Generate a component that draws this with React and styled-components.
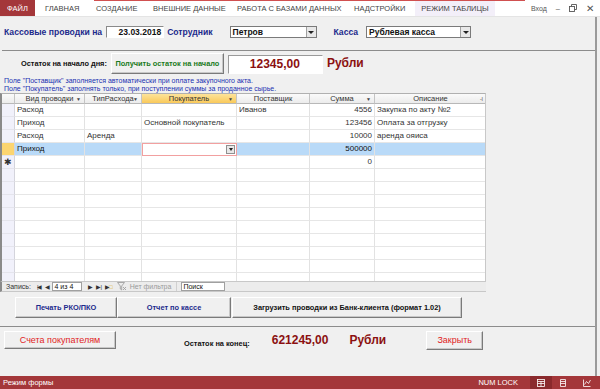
import React from "react";
import styled, { createGlobalStyle } from "styled-components";

const Global = createGlobalStyle`
  html, body { margin: 0; padding: 0; }
  body { width: 600px; height: 389px; overflow: hidden; background: #f0f0f0; font-family: "Liberation Sans", Arial, sans-serif; }
  * { box-sizing: border-box; }
`;

const Page = styled.div`
  width: 600px; height: 389px; display: flex; flex-direction: column;
`;

const Ribbon = styled.div`
  height: 17px; background: #fff; display: flex; align-items: stretch; position: relative;
  font-size: 7.5px; color: #444; border-bottom: 1px solid #e4e4e4; white-space: nowrap;
`;
const RedLine = styled.div`
  position: absolute; top: 0; left: 94px; width: 431px; height: 1px; background: #d05050;
`;
const FileTab = styled.div`
  width: 35px; background: #a4373a; color: #fff; display: flex; align-items: center; justify-content: center;
  margin-right: 10px;
`;
const Tab = styled.div`
  display: flex; align-items: center; width: ${p => p.$w}px; flex-shrink: 0;
  justify-content: ${p => (p.$active ? "center" : "flex-start")};
  background: ${p => (p.$active ? "#f3eff9" : "transparent")};
`;
const WinCtl = styled.div`
  margin-left: auto; display: flex; align-items: center; gap: 9px; padding-right: 6px; color: #555;
`;

const Main = styled.div`
  flex: 1; display: flex; flex-direction: column; border-right: 2px solid #9a9a9a; margin-right: 3px;
`;

const HeaderRow = styled.div`
  height: 33px; display: flex; align-items: flex-start; padding: 9px 0 0 4px;
`;
const NavyLabel = styled.span`
  color: #1c2a8c; font-size: 8.6px; font-weight: bold; line-height: 12px;
  margin-left: ${p => p.$ml || 0}px;
`;
const DateBox = styled.div`
  width: 58px; height: 12px; background: #fff; border: 1px solid #8a8a8a; border-right-color: #fff;
  border-bottom-color: #fff; font-size: 8.5px; font-weight: bold; color: #111; text-align: right;
  padding-right: 2px; line-height: 10px; margin: 0 3px 0 4px;
`;
const Combo = styled.div`
  width: ${p => p.$w}px; height: 12px; background: #fff; border: 1px solid #7a7a7a; display: flex;
  margin-left: ${p => p.$ml || 0}px;
`;
const ComboText = styled.div`
  flex: 1; font-size: 8.5px; font-weight: bold; color: #111; padding-left: 2px; line-height: 10px;
`;
const DropBtn = styled.div`
  width: 10px; background: #e8e8e8; border-left: 1px solid #a0a0a0; display: flex; align-items: center;
  justify-content: center;
  &::after { content: ""; border-left: 3px solid transparent; border-right: 3px solid transparent; border-top: 3px solid #222; }
`;

const Divider = styled.div`
  height: 1px; background: #8c8c8c; margin: ${p => p.$m || "0"};
`;

const BalanceRow = styled.div`
  display: flex; align-items: center; height: 22px; padding-left: 21px; margin-top: 1px;
`;
const BoldLabel = styled.span`
  font-size: 7.4px; font-weight: bold; color: #111; margin-right: ${p => p.$mr || 0}px; white-space: nowrap;
`;
const Button = styled.div`
  height: ${p => p.$h || 20}px; width: ${p => p.$w}px; background: #f0f0f0;
  border: 1px solid; border-color: #fff #7a7a7a #7a7a7a #fff; box-shadow: inset -1px -1px 0 #c8c8c8;
  display: flex; align-items: center; justify-content: center; white-space: nowrap;
  font-size: ${p => p.$fs || 7.4}px; font-weight: ${p => (p.$bold ? "bold" : "normal")};
  color: ${p => p.$color || "#1c2a8c"}; margin-left: ${p => p.$ml || 0}px; flex-shrink: 0;
`;
const ValueBox = styled.div`
  width: 95px; height: 19px; margin-left: 4px; background: #fff; border: 1px solid #9a9a9a;
  border-right-color: #fff; border-bottom-color: #fff; color: #8b1010; font-weight: bold;
  font-size: 12px; text-align: right; padding-right: 22px; line-height: 17px; align-self: flex-end;
`;
const Rub = styled.span`
  color: #8b1010; font-weight: bold; font-size: 12px; margin-left: ${p => p.$ml || 4}px; white-space: nowrap;
`;

const Notes = styled.div`
  color: #2030b0; font-size: 7px; line-height: 8px; padding: 3px 0 0 4px; height: 19px;
`;

const Sheet = styled.div`
  width: 486px; height: 188px; display: grid; overflow: hidden; margin-left: 0;
  grid-template-columns: 13px 70px 57px 95px 73px 65px 112px;
  grid-auto-rows: 13px; grid-template-rows: 10px; background: #fff;
  border-left: 2px solid #8a8a8a; border-top: 1px solid #b0b0b0; border-right: 1px solid #c8c8c8;
  font-size: 8px; color: #333;
`;
const Head = styled.div`
  background: ${p => (p.$hl ? "linear-gradient(#fde39a, #f9c95a)" : "linear-gradient(#fafafa, #ececec)")};
  border-right: 1px solid #c4c4c4; border-bottom: 1px solid #b8b8b8;
  display: flex; align-items: center; justify-content: center; position: relative; color: #333;
  font-size: 7.5px; line-height: 9px; white-space: nowrap;
`;
const HeadArrow = styled.span`
  position: absolute; right: 3px; top: 1px; font-size: 5px; color: #444;
`;
const Sel = styled.div`
  background: ${p => (p.$cur ? "#fcd570" : "#f1f1fb")}; border-right: 1px solid #d4d4dc;
  border-bottom: 1px solid #e4e4ec; font-size: 9px; color: #333; display: flex; align-items: center;
  justify-content: center;
`;
const Cell = styled.div`
  border-right: 1px solid #e2e2e2; border-bottom: 1px solid #e6e6e6;
  background: ${p => (p.$cur ? "#b9daf8" : "#fff")}; padding: 0 2px; line-height: 12px;
  text-align: ${p => (p.$right ? "right" : "left")}; white-space: nowrap; overflow: hidden;
  color: ${p => (p.$cur ? "#111" : "#333")};
`;
const EditCell = styled.div`
  background: #fff; border: 1px solid #f2a0a0; display: flex; justify-content: flex-end; padding: 1px;
`;
const MiniDrop = styled.div`
  width: 9px; background: #e8e8e8; border: 1px solid #909090; display: flex; align-items: center;
  justify-content: center;
  &::after { content: ""; border-left: 2.5px solid transparent; border-right: 2.5px solid transparent; border-top: 3px solid #222; }
`;

const NavBar = styled.div`
  width: 486px; height: 11px; background: #ececec; display: flex; align-items: center;
  border-left: 2px solid #8a8a8a; border-top: 1px solid #c8c8c8; border-bottom: 1px solid #c8c8c8;
  font-size: 7px; color: #333; padding-left: 4px; white-space: nowrap;
`;
const NavIcon = styled.span`
  font-size: 6px; margin-left: ${p => p.$ml || 4}px; color: #333; letter-spacing: -1px;
`;
const NavBox = styled.div`
  width: ${p => p.$w}px; height: 9px; background: #fff; border: 1px solid #a0a0a0; font-size: 7px;
  line-height: 7px; padding-left: 1px; margin-left: ${p => p.$ml || 0}px; color: #111;
`;
const NoFilter = styled.span`
  color: #9a9a9a; margin-left: 5px; display: flex; align-items: center; gap: 3px;
  padding-right: 5px; border-right: 1px solid #d0d0d0;
`;

const ButtonsRow = styled.div`
  display: flex; padding: 5px 0 0 15px; height: 34px;
`;

const BottomRow = styled.div`
  display: flex; align-items: center; padding: 2px 0 0 4px; height: 24px;
`;

const Status = styled.div`
  height: 13px; background: #a4373a; color: #fff; font-size: 7.5px; display: flex; align-items: center;
  padding-left: 3px; margin-top: auto;
`;
const StatusRight = styled.div`
  margin-left: auto; display: flex; align-items: center; height: 100%;
`;
const StatusIcon = styled.div`
  width: ${p => p.$w || 22}px; height: 100%; display: flex; align-items: center; justify-content: center;
  background: ${p => (p.$on ? "#8a2a2d" : "transparent")};
`;

const columns = [
  { t: "Вид проводки" },
  { t: "ТипРасхода" },
  { t: "Покупатель", hl: true },
  { t: "Поставщик", none: true },
  { t: "Сумма" },
  { t: "Описание", sort: true },
];

const rows = [
  ["Расход", "", "", "Иванов", "4556", "Закупка по акту №2"],
  ["Приход", "", "Основной покупатель", "", "123456", "Оплата за отгрузку"],
  ["Расход", "Аренда", "", "", "10000", "аренда ояиса"],
];

const Ico = ({ children }) => (
  <svg width="10" height="8" viewBox="0 0 10 8" fill="none" stroke="#fff" strokeWidth="0.8">{children}</svg>
);

export default function App() {
  return (
    <Page>
      <Global />
      <Ribbon>
        <RedLine />
        <FileTab>ФАЙЛ</FileTab>
        <Tab $w={51}>ГЛАВНАЯ</Tab>
        <Tab $w={57}>СОЗДАНИЕ</Tab>
        <Tab $w={84}>ВНЕШНИЕ ДАННЫЕ</Tab>
        <Tab $w={117}>РАБОТА С БАЗАМИ ДАННЫХ</Tab>
        <Tab $w={61}>НАДСТРОЙКИ</Tab>
        <Tab $w={80} $active>РЕЖИМ ТАБЛИЦЫ</Tab>
        <WinCtl>
          <span style={{ fontSize: 7 }}>Вход</span>
          <span>–</span>
          <svg width="8" height="8" viewBox="0 0 8 8" fill="none" stroke="#555" strokeWidth="0.9">
            <rect x="0.5" y="2.5" width="5" height="5" />
            <path d="M2.5 2.5V0.5h5v5h-2" />
          </svg>
          <span style={{ fontSize: 10 }}>✕</span>
        </WinCtl>
      </Ribbon>
      <Main>
        <HeaderRow>
          <NavyLabel>Кассовые проводки на</NavyLabel>
          <DateBox>23.03.2018</DateBox>
          <NavyLabel>Сотрудник</NavyLabel>
          <Combo $w={87} $ml={17}>
            <ComboText>Петров</ComboText>
            <DropBtn />
          </Combo>
          <NavyLabel $ml={17}>Касса</NavyLabel>
          <Combo $w={105} $ml={8}>
            <ComboText>Рублевая касса</ComboText>
            <DropBtn />
          </Combo>
        </HeaderRow>
        <Divider $m="0 0 0 2px" />
        <BalanceRow>
          <BoldLabel $mr={4}>Остаток на начало дня:</BoldLabel>
          <Button $w={113} $h={21} $bold $color="#1a7a22">Получить остаток на начало</Button>
          <ValueBox>12345,00</ValueBox>
          <Rub>Рубли</Rub>
        </BalanceRow>
        <Notes>
          <div>Поле "Поставщик" заполняется автоматически при оплате закупочного акта.</div>
          <div>Поле "Покупатель" заполнять только, при поступлении суммы за проданное сырье.</div>
        </Notes>
        <Sheet>
          <Head />
          {columns.map(c => (
            <Head key={c.t} $hl={c.hl}>
              {c.t}
              {!c.none && <HeadArrow>{c.sort ? "-I" : "▼"}</HeadArrow>}
            </Head>
          ))}
          {rows.map((r, i) => (
            <React.Fragment key={i}>
              <Sel />
              {r.map((v, j) => (
                <Cell key={j} $right={j === 4}>{v}</Cell>
              ))}
            </React.Fragment>
          ))}
          <Sel $cur />
          <Cell $cur>Приход</Cell>
          <Cell $cur />
          <EditCell><MiniDrop /></EditCell>
          <Cell $cur />
          <Cell $cur $right>500000</Cell>
          <Cell $cur />
          <Sel>✱</Sel>
          <Cell /><Cell /><Cell /><Cell />
          <Cell $right>0</Cell>
          <Cell />
          {Array.from({ length: 10 }).map((_, i) => (
            <React.Fragment key={"e" + i}>
              <Sel /><Cell /><Cell /><Cell /><Cell /><Cell /><Cell />
            </React.Fragment>
          ))}
        </Sheet>
        <NavBar>
          Запись:
          <NavIcon $ml={6}>|◀</NavIcon>
          <NavIcon>◀</NavIcon>
          <NavBox $w={30} $ml={3}>4 из 4</NavBox>
          <NavIcon $ml={6}>▶</NavIcon>
          <NavIcon>▶|</NavIcon>
          <NavIcon>▶<span style={{ color: "#d8a800" }}>□</span></NavIcon>
          <NoFilter>
            <svg width="10" height="9" viewBox="0 0 10 9" fill="none" stroke="#a0a0a0" strokeWidth="0.9">
              <path d="M0.5 0.5h7l-2.8 3.5v4l-1.4-1V4z" />
              <path d="M6 5l3 3M9 5l-3 3" />
            </svg>
            Нет фильтра
          </NoFilter>
          <NavBox $w={44} $ml={4}>Поиск</NavBox>
        </NavBar>
        <ButtonsRow>
          <Button $w={102} $h={21} $bold>Печать РКО/ПКО</Button>
          <Button $w={114} $h={21} $bold>Отчет по кассе</Button>
          <Button $w={230} $h={21} $bold $color="#111" $ml={1}>Загрузить проводки из Банк-клиента (формат 1.02)</Button>
        </ButtonsRow>
        <Divider $m="0 0 0 0" />
        <BottomRow>
          <Button $w={112} $h={18} $color="#e01e1e" $fs={9}>Счета покупателям</Button>
          <BoldLabel style={{ marginLeft: 68, marginTop: 6 }}>Остаток на конец:</BoldLabel>
          <Rub $ml={22}>621245,00</Rub>
          <Rub $ml={21}>Рубли</Rub>
          <Button $w={57} $h={19} $color="#e01e1e" $fs={9} $ml={40}>Закрыть</Button>
        </BottomRow>
      </Main>
      <Status>
        Режим формы
        <StatusRight>
          <span style={{ marginRight: 12 }}>NUM LOCK</span>
          <StatusIcon $on>
            <Ico><rect x="1.5" y="0.5" width="7" height="7" /><path d="M1.5 2.5h7M1.5 4.5h7M5 2.5v5" /></Ico>
          </StatusIcon>
          <StatusIcon>
            <Ico><path d="M2.5 0.5h5v7h-5zM2.5 2.5h5M2.5 4.5h5" /></Ico>
          </StatusIcon>
          <StatusIcon $w={26}>
            <Ico><path d="M1.5 0.5v7h7M2.5 5.5l2-3 2 2 2-3.5" /></Ico>
          </StatusIcon>
        </StatusRight>
      </Status>
    </Page>
  );
}
